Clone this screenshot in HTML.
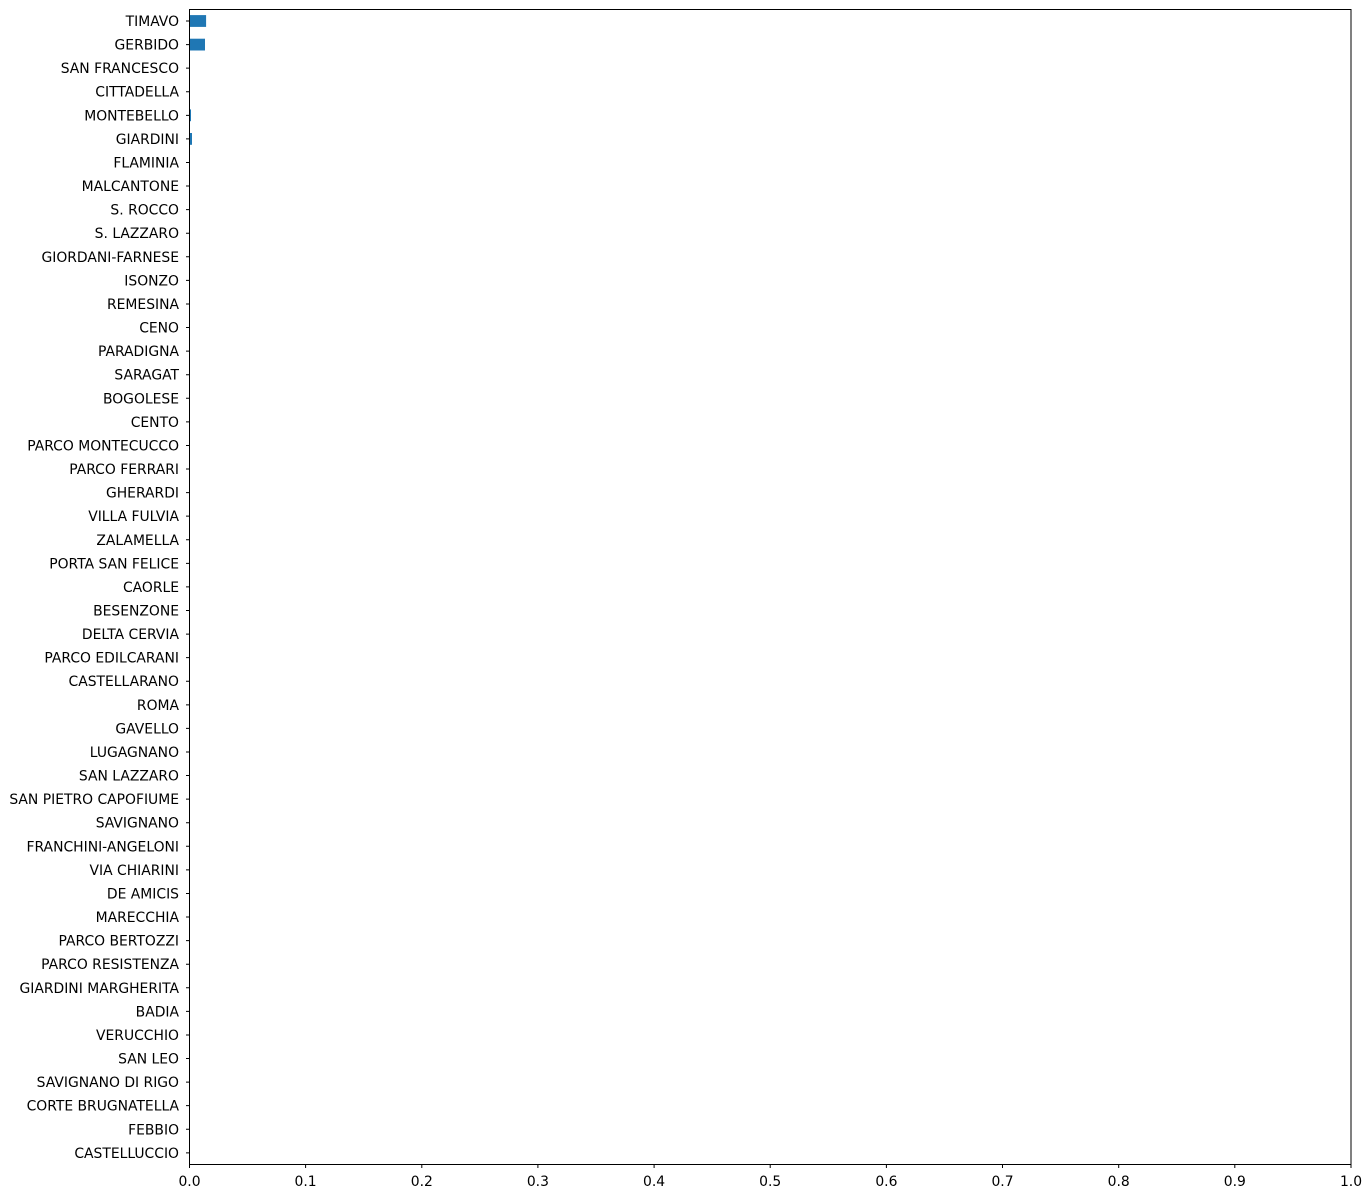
<!DOCTYPE html>
<html><head><meta charset="utf-8"><style>html,body{margin:0;padding:0;background:#fff}svg{display:block}</style></head>
<body>
<svg width="1372" height="1198" viewBox="0 0 1372 1198" xmlns="http://www.w3.org/2000/svg" font-family="DejaVu Sans, Liberation Sans, sans-serif" font-size="13.9" fill="#000">
<rect width="1372" height="1198" fill="#fff"/>
<g fill="#1f77b4">
<rect x="189.5" y="15.1" width="16.6" height="11.8"/>
<rect x="189.5" y="38.7" width="15.5" height="11.8"/>
<rect x="189.5" y="109.4" width="1.5" height="11.8"/>
<rect x="189.5" y="133.0" width="2.5" height="11.8"/>
</g>
<rect x="189.5" y="9.5" width="1161.5" height="1155" fill="none" stroke="#000" stroke-width="1"/>
<g text-anchor="middle">
<text x="189.5" y="1186">0.0</text>
<text x="305.6" y="1186">0.1</text>
<text x="421.8" y="1186">0.2</text>
<text x="537.9" y="1186">0.3</text>
<text x="654.1" y="1186">0.4</text>
<text x="770.2" y="1186">0.5</text>
<text x="886.4" y="1186">0.6</text>
<text x="1002.5" y="1186">0.7</text>
<text x="1118.7" y="1186">0.8</text>
<text x="1234.8" y="1186">0.9</text>
<text x="1351" y="1186">1.0</text>
</g>
<g stroke="#000" stroke-width="1">
<path d="M189.5,1164.5v3.5M305.6,1164.5v3.5M421.8,1164.5v3.5M537.9,1164.5v3.5M654.1,1164.5v3.5M770.2,1164.5v3.5M886.4,1164.5v3.5M1002.5,1164.5v3.5M1118.7,1164.5v3.5M1234.8,1164.5v3.5M1351,1164.5v3.5"/>
</g>
<g text-anchor="end">
<text x="179" y="26">TIMAVO</text>
<text x="179" y="49.58">GERBIDO</text>
<text x="179" y="73.16">SAN FRANCESCO</text>
<text x="179" y="96.74">CITTADELLA</text>
<text x="179" y="120.32">MONTEBELLO</text>
<text x="179" y="143.9">GIARDINI</text>
<text x="179" y="167.48">FLAMINIA</text>
<text x="179" y="191.06">MALCANTONE</text>
<text x="179" y="214.64">S. ROCCO</text>
<text x="179" y="238.22">S. LAZZARO</text>
<text x="179" y="261.8">GIORDANI-FARNESE</text>
<text x="179" y="285.38">ISONZO</text>
<text x="179" y="308.96">REMESINA</text>
<text x="179" y="332.54">CENO</text>
<text x="179" y="356.12">PARADIGNA</text>
<text x="179" y="379.7">SARAGAT</text>
<text x="179" y="403.28">BOGOLESE</text>
<text x="179" y="426.86">CENTO</text>
<text x="179" y="450.44">PARCO MONTECUCCO</text>
<text x="179" y="474.02">PARCO FERRARI</text>
<text x="179" y="497.6">GHERARDI</text>
<text x="179" y="521.18">VILLA FULVIA</text>
<text x="179" y="544.76">ZALAMELLA</text>
<text x="179" y="568.34">PORTA SAN FELICE</text>
<text x="179" y="591.92">CAORLE</text>
<text x="179" y="615.5">BESENZONE</text>
<text x="179" y="639.08">DELTA CERVIA</text>
<text x="179" y="662.66">PARCO EDILCARANI</text>
<text x="179" y="686.24">CASTELLARANO</text>
<text x="179" y="709.82">ROMA</text>
<text x="179" y="733.4">GAVELLO</text>
<text x="179" y="756.98">LUGAGNANO</text>
<text x="179" y="780.56">SAN LAZZARO</text>
<text x="179" y="804.14">SAN PIETRO CAPOFIUME</text>
<text x="179" y="827.72">SAVIGNANO</text>
<text x="179" y="851.3">FRANCHINI-ANGELONI</text>
<text x="179" y="874.88">VIA CHIARINI</text>
<text x="179" y="898.46">DE AMICIS</text>
<text x="179" y="922.04">MARECCHIA</text>
<text x="179" y="945.62">PARCO BERTOZZI</text>
<text x="179" y="969.2">PARCO RESISTENZA</text>
<text x="179" y="992.78">GIARDINI MARGHERITA</text>
<text x="179" y="1016.36">BADIA</text>
<text x="179" y="1039.94">VERUCCHIO</text>
<text x="179" y="1063.52">SAN LEO</text>
<text x="179" y="1087.1">SAVIGNANO DI RIGO</text>
<text x="179" y="1110.68">CORTE BRUGNATELLA</text>
<text x="179" y="1134.26">FEBBIO</text>
<text x="179" y="1157.84">CASTELLUCCIO</text>
</g>
<g stroke="#000" stroke-width="1">
<path d="M186,21h3.5M186,44.58h3.5M186,68.16h3.5M186,91.74h3.5M186,115.32h3.5M186,138.9h3.5M186,162.48h3.5M186,186.06h3.5M186,209.64h3.5M186,233.22h3.5M186,256.8h3.5M186,280.38h3.5M186,303.96h3.5M186,327.54h3.5M186,351.12h3.5M186,374.7h3.5M186,398.28h3.5M186,421.86h3.5M186,445.44h3.5M186,469.02h3.5M186,492.6h3.5M186,516.18h3.5M186,539.76h3.5M186,563.34h3.5M186,586.92h3.5M186,610.5h3.5M186,634.08h3.5M186,657.66h3.5M186,681.24h3.5M186,704.82h3.5M186,728.4h3.5M186,751.98h3.5M186,775.56h3.5M186,799.14h3.5M186,822.72h3.5M186,846.3h3.5M186,869.88h3.5M186,893.46h3.5M186,917.04h3.5M186,940.62h3.5M186,964.2h3.5M186,987.78h3.5M186,1011.36h3.5M186,1034.94h3.5M186,1058.52h3.5M186,1082.1h3.5M186,1105.68h3.5M186,1129.26h3.5M186,1152.84h3.5"/>
</g>
</svg>
</body></html>
